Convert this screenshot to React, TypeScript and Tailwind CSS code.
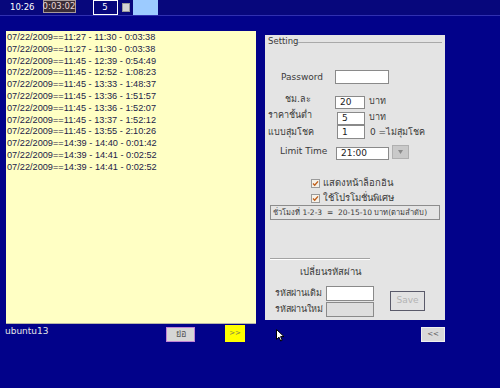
import React from 'react';

const logRows: [string, string, string][] = [
  ['11:27', '11:30', '0:03:38'],
  ['11:27', '11:30', '0:03:38'],
  ['11:45', '12:39', '0:54:49'],
  ['11:45', '12:52', '1:08:23'],
  ['11:45', '13:33', '1:48:37'],
  ['11:45', '13:36', '1:51:57'],
  ['11:45', '13:36', '1:52:07'],
  ['11:45', '13:37', '1:52:12'],
  ['11:45', '13:55', '2:10:26'],
  ['14:39', '14:40', '0:01:42'],
  ['14:39', '14:41', '0:02:52'],
  ['14:39', '14:41', '0:02:52'],
];

const ui = { fontFamily: '"DejaVu Sans", "Noto Sans", sans-serif' };
const arial = { fontFamily: '"Liberation Sans", Arial, sans-serif' };

// small checked box, orange tick like the old gtk theme
const Check = () => (
  <svg width="9" height="9" viewBox="0 0 9 9" className="shrink-0">
    <rect x="0.5" y="0.5" width="8" height="8" fill="#f6f2ea" stroke="#9a9a9a" />
    <path d="M2 4.6 L3.7 6.3 L7 2.4" fill="none" stroke="#c0601c" strokeWidth="1.4" />
  </svg>
);

const Field: React.FC<{ value?: string; w: string; h: string; disabled?: boolean }> = ({ value, w, h, disabled }) => (
  <div
    className={`${w} ${h} border border-[#8a8a8a] ${disabled ? 'bg-[#dedede]' : 'bg-white'} flex items-center pl-[4px] text-[9px] text-[#222] leading-none`}
  >
    {value}
  </div>
);

const SettingPanel = () => (
  <div className="w-[180px] h-[285px] bg-[#e4e4e4] flex flex-col text-[#3a3a3a]" style={ui}>
    {/* legend */}
    <div className="flex items-center h-[10px] pl-[3px] mt-[1px]">
      <span className="text-[8.5px] leading-none">Setting</span>
      <div className="flex-1 h-px bg-[#a9a9a9] mr-[3px] mt-[3px]" />
    </div>

    <div className="flex items-center h-[14px] mt-[24px]">
      <span className="ml-[16px] w-[54px] text-[9px] leading-none">Password</span>
      <Field w="w-[54px]" h="h-[14px]" />
    </div>

    <div className="flex items-center h-[13px] mt-[12px]">
      <span className="ml-[20px] w-[50px] text-[9px] leading-none -mt-[6px]">ชม.ละ</span>
      <Field value="20" w="w-[30px]" h="h-[13px]" />
      <span className="ml-[4px] text-[9px] leading-none -mt-[2px]">บาท</span>
    </div>

    <div className="flex items-center h-[13px] mt-[3px]">
      <span className="ml-[3px] w-[69px] text-[9px] leading-none -mt-[6px]">ราคาชั้นต่ำ</span>
      <Field value="5" w="w-[28px]" h="h-[13px]" />
      <span className="ml-[4px] text-[9px] leading-none -mt-[3px]">บาท</span>
    </div>

    <div className="flex items-center h-[14px]">
      <span className="ml-[3px] w-[69px] text-[9px] leading-none">แบบสุ่มโชค</span>
      <Field value="1" w="w-[28px]" h="h-[14px]" />
      <span className="ml-[5px] text-[9px] leading-none">0 =ไม่สุ่มโชค</span>
    </div>

    <div className="flex items-center h-[14px] mt-[7px]">
      <span className="ml-[15px] w-[56px] text-[9px] leading-none -mt-[4px]">Limit Time</span>
      <Field value="21:00" w="w-[53px]" h="h-[13px]" />
      <div className="ml-[3px] w-[17px] h-[14px] -mt-[2px] bg-[#c9c9c9] border border-[#b0b0b0] flex items-center justify-center">
        <svg width="5" height="4" viewBox="0 0 5 4">
          <path d="M0 0 H5 L2.5 4 Z" fill="#8a8a8a" />
        </svg>
      </div>
    </div>

    <div className="flex items-center h-[12px] mt-[17px] ml-[46px] gap-[3px]">
      <Check />
      <span className="text-[9.5px] leading-none">แสดงหน้าล็อกอิน</span>
    </div>
    <div className="flex items-center h-[12px] mt-[3px] ml-[46px] gap-[3px]">
      <Check />
      <span className="text-[9.5px] leading-none">ใช้โปรโมชั่นพิเศษ</span>
    </div>

    <div className="mt-[1px] ml-[5px] w-[170px] h-[15px] border border-[#8c8c8c] flex items-center pl-[2px] text-[7.5px] leading-none whitespace-nowrap">
      ชั่วโมงที่ 1-2-3&nbsp;&nbsp;=&nbsp;&nbsp;20-15-10 บาท(ตามลำดับ)
    </div>

    <div className="mt-[38px] ml-[5px] w-[100px] h-[2px] border-t border-[#a3a3a3] border-b border-b-white" />

    <div className="mt-[7px] ml-[35px] h-[12px] text-[9.5px] leading-none">เปลี่ยนรหัสผ่าน</div>

    <div className="flex items-start mt-[7px]">
      <div className="flex flex-col">
        <div className="flex items-center h-[15px]">
          <span className="ml-[10px] w-[51px] text-[9px] leading-none whitespace-nowrap">รหัสผ่านเดิม</span>
          <Field w="w-[48px]" h="h-[15px]" />
        </div>
        <div className="flex items-center h-[15px] mt-[1px]">
          <span className="ml-[10px] w-[51px] text-[9px] leading-none whitespace-nowrap">รหัสผ่านใหม่</span>
          <Field w="w-[48px]" h="h-[15px]" disabled />
        </div>
      </div>
      <div className="ml-[16px] mt-[5px] w-[35px] h-[20px] border border-[#5a5a6a] bg-[#e2e2e2] flex items-center justify-center text-[9px] text-[#b4b4b4]">
        Save
      </div>
    </div>
  </div>
);

export default function App() {
  return (
    <div className="relative w-[500px] h-[388px] bg-[#02028a] overflow-hidden" style={ui}>
      {/* top status strip */}
      <div className="h-[16px] bg-[#07077c] border-b border-[#3030b0] flex items-start">
        <span className="ml-[10px] mt-[3px] text-[8.5px] leading-none text-white">10:26</span>
        <div className="ml-[8px] w-[33px] h-[13px] bg-[#3a2d38] border border-[#a89a9a] flex items-center justify-center text-[8.5px] leading-none text-[#ead6d6]">
          0:03:02
        </div>
        <div className="ml-[17px] w-[25px] h-[15px] border border-white flex items-center justify-center text-[8.5px] leading-none text-white">
          5
        </div>
        <div className="ml-[4px] mt-[3px] w-[8px] h-[9px] bg-[#d4d4d4] border border-[#9a9a9a]" />
        <div className="ml-[3px] w-[25px] h-[15px] bg-[#9ccbff]" />
      </div>

      <div className="flex items-start">
        {/* left: session log */}
        <div className="flex flex-col w-[256px] pl-[5px]">
          <div className="mt-[15px] ml-[1px] w-[250px] h-[293px] bg-[#ffffc4] border-b border-[#b8b8a8] pt-[1px] pl-[1px]">
            {logRows.map((r, i) => (
              <div key={i} className="text-[9.2px] leading-[11.8px] text-[#1c1c48] whitespace-nowrap" style={arial}>
                07/22/2009=={r[0]} - {r[1]} - {r[2]}
              </div>
            ))}
          </div>
          <div className="flex items-start h-[20px]">
            <span className="w-[161px] mt-[1px] text-[9px] leading-[12px] text-[#e6e6e6]">ubuntu13</span>
            <div className="mt-[3px] w-[29px] h-[15px] bg-[#d6d6d6] border border-[#c084d4] flex items-center justify-center text-[9px] leading-none text-[#555]">
              ย่อ
            </div>
            <div className="ml-[30px] mt-[1px] w-[20px] h-[17px] bg-[#ffff00] flex items-center justify-center text-[7px] leading-none text-[#7a7a50]">
              &gt;&gt;
            </div>
          </div>
        </div>

        {/* right: settings */}
        <div className="flex flex-col ml-[9px]">
          <div className="mt-[19px]">
            <SettingPanel />
          </div>
          <div className="flex">
            <div className="ml-[156px] mt-[7px] w-[24px] h-[15px] bg-[#d9d9d9] border border-[#efefef] flex items-center justify-center text-[7px] leading-none text-[#555]">
              &lt;&lt;
            </div>
          </div>
        </div>
      </div>

      {/* mouse pointer */}
      <svg className="absolute left-[276px] top-[329px]" width="9" height="13" viewBox="0 0 9 13">
        <path d="M0.5 0.5 L0.5 10.5 L3 8.2 L4.7 12 L6.2 11.3 L4.6 7.6 L8 7.6 Z" fill="#fff" stroke="#000" strokeWidth="1" />
      </svg>
    </div>
  );
}
